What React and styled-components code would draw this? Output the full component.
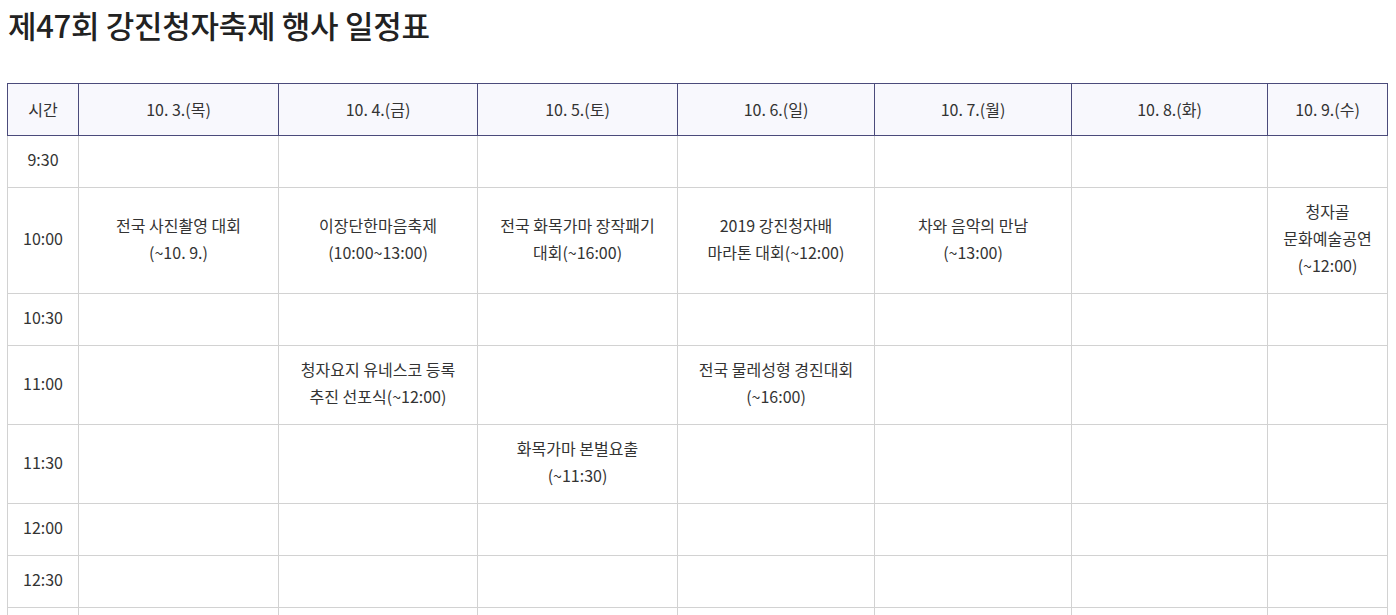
import React from 'react'
import styled, { createGlobalStyle } from 'styled-components'

const GlobalStyle = createGlobalStyle`
  body {
    margin: 0;
    background: #fff;
    font-family: "Noto Sans CJK KR", "Noto Sans", sans-serif;
    color: #333;
  }
`

const days = ['10. 3.(목)', '10. 4.(금)', '10. 5.(토)', '10. 6.(일)', '10. 7.(월)', '10. 8.(화)', '10. 9.(수)']
const widths = [71, 200, 199, 200, 197, 197, 196, 120]

const rows = [
  { time: '9:30', cells: {} },
  {
    time: '10:00',
    cells: {
      0: ['전국 사진촬영 대회', '(~10. 9.)'],
      1: ['이장단한마음축제', '(10:00~13:00)'],
      2: ['전국 화목가마 장작패기', '대회(~16:00)'],
      3: ['2019 강진청자배', '마라톤 대회(~12:00)'],
      4: ['차와 음악의 만남', '(~13:00)'],
      6: ['청자골', '문화예술공연', '(~12:00)'],
    },
  },
  { time: '10:30', cells: {} },
  {
    time: '11:00',
    cells: {
      1: ['청자요지 유네스코 등록', '추진 선포식(~12:00)'],
      3: ['전국 물레성형 경진대회', '(~16:00)'],
    },
  },
  { time: '11:30', cells: { 2: ['화목가마 본벌요출', '(~11:30)'] } },
  { time: '12:00', cells: {} },
  { time: '12:30', cells: {} },
  { time: '13:00', cells: {} },
]

function App() {
  return (
    <Page>
      <GlobalStyle />
      <Title>제47회 강진청자축제 행사 일정표</Title>
      <Schedule>
        <colgroup>
          {widths.map((w, i) => (
            <col key={i} style={{ width: w }} />
          ))}
        </colgroup>
        <thead>
          <tr>
            <HeadCell>시간</HeadCell>
            {days.map(d => (
              <HeadCell key={d}>{d}</HeadCell>
            ))}
          </tr>
        </thead>
        <tbody>
          {rows.map(row => (
            <tr key={row.time}>
              <Cell>{row.time}</Cell>
              {days.map((d, i) => (
                <Cell key={d}>
                  {(row.cells[i] || []).map((line, j) => (
                    <Line key={j}>{line}</Line>
                  ))}
                </Cell>
              ))}
            </tr>
          ))}
        </tbody>
      </Schedule>
    </Page>
  )
}

export default App

const Page = styled.div`
  padding: 0 7px;
`

const Title = styled.h1`
  margin: 0;
  padding: 4px 0 0 1px;
  font-size: 31px;
  line-height: 42px;
  font-weight: 500;
  letter-spacing: -0.3px;
  color: #222;
`

const Schedule = styled.table`
  margin-top: 37px;
  width: 1381px;
  table-layout: fixed;
  border-collapse: collapse;
  font-size: 16px;
`

const HeadCell = styled.th`
  padding: 12px 6px;
  line-height: 27px;
  font-weight: 400;
  color: #333;
  background: #f8f8fd;
  border: 1px solid #4b4b7b;
  text-align: center;
`

const Cell = styled.td`
  padding: 10px 6px 14px;
  line-height: 27px;
  color: #333;
  border: 1px solid #d2d2d2;
  text-align: center;
  vertical-align: middle;
`

const Line = styled.div`
  white-space: nowrap;
`
